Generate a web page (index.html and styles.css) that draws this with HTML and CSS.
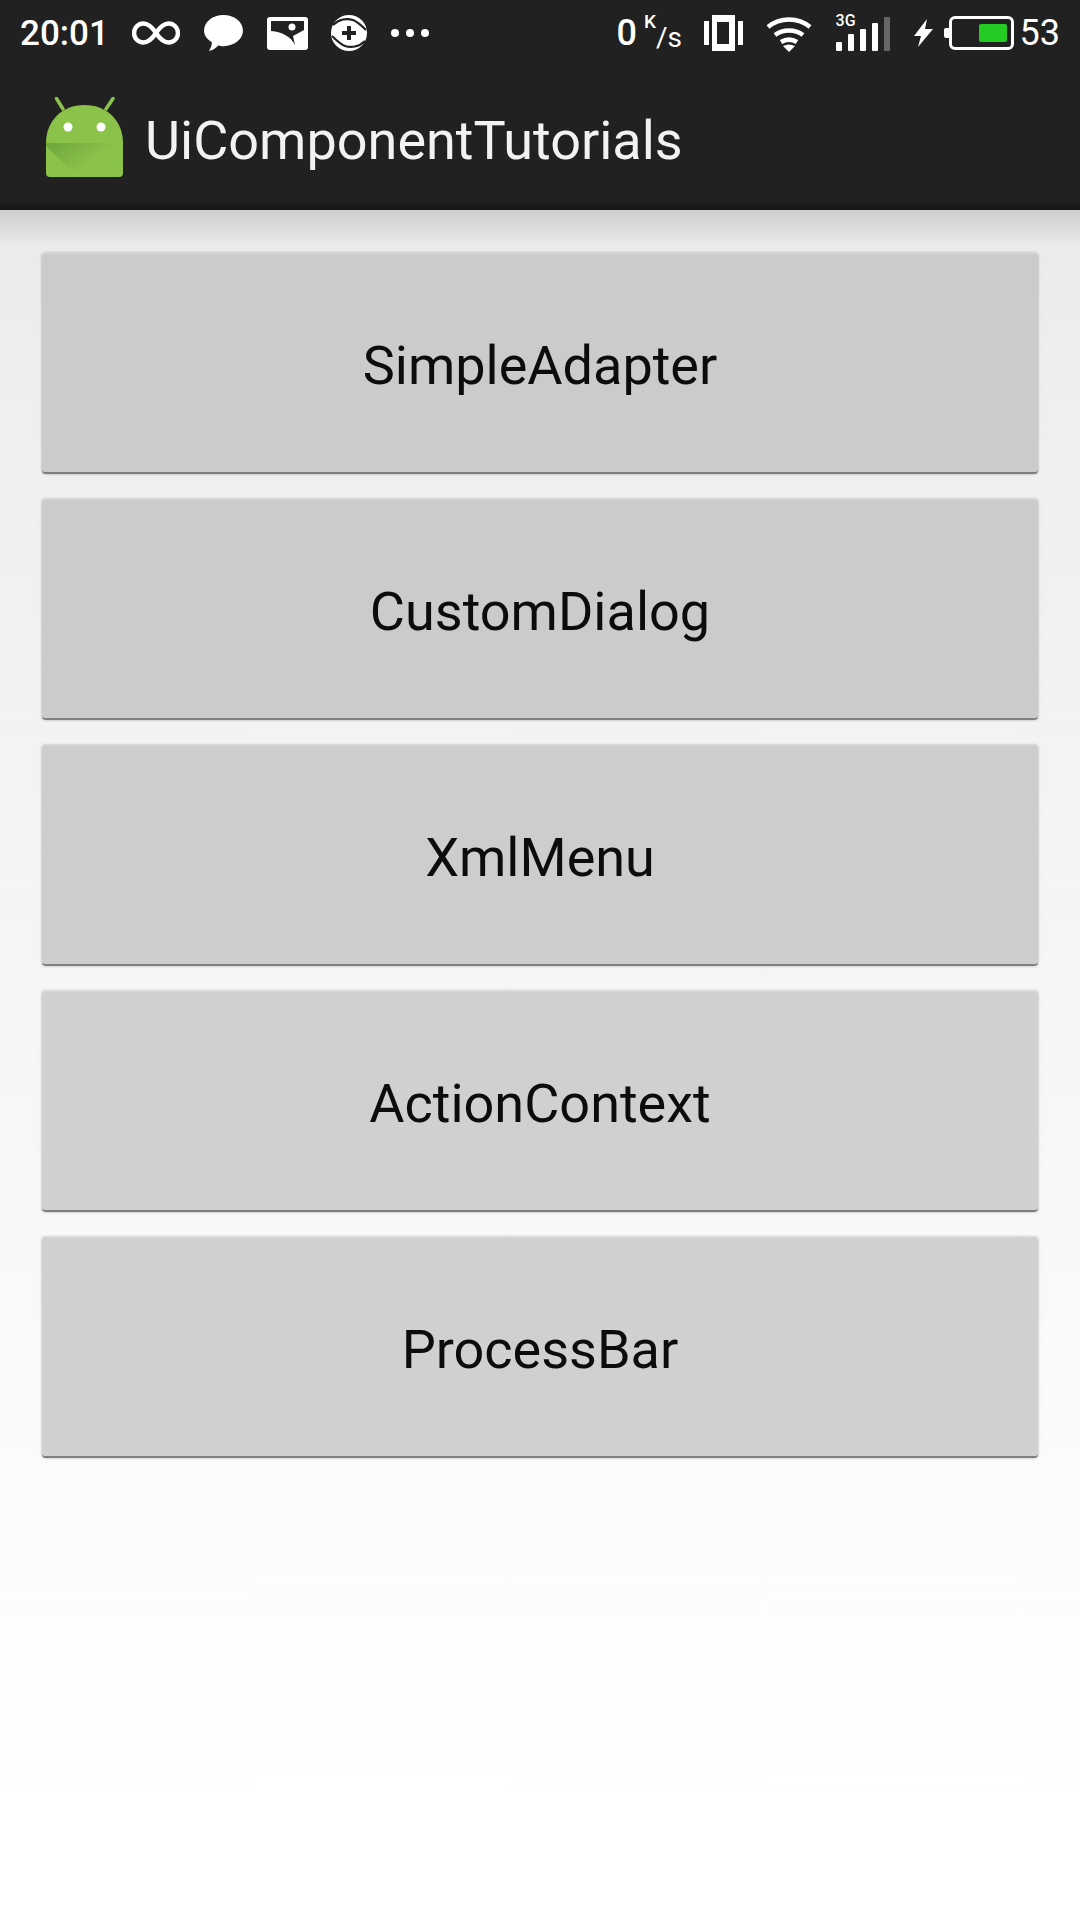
FILE: index.html
```html
<!DOCTYPE html>
<html lang="en">
<head>
  <meta charset="UTF-8" />
  <meta name="viewport" content="width=device-width, initial-scale=1.0"/>
  <title>UiComponentTutorials</title>
  <link rel="stylesheet" href="styles.css">
</head>
<body>
  <header class="top">
    <div class="status-bar">
      <div class="status-left">
        <span class="time">20:01</span>
        <svg class="ic-loop" width="48" height="24" viewBox="0 0 48 24"><path d="M24 12C20 6 16 2.500 11.500 2.500a9.500 9.500 0 0 0 0 19c4.500 0 8.500-3.500 12.500-9.500s8-9.500 12.500-9.500a9.500 9.500 0 0 1 0 19c-4.500 0-8.500-3.500-12.500-9.500z" fill="none" stroke="#fff" stroke-width="4.500"/></svg>
        <svg class="ic-chat" width="39" height="36" viewBox="0 0 40 37"><path d="M20 0c11 0 20 7 20 16s-9 16-20 16c-2 0-4 0-5-1-3 3-6 5-10 6 2-3 3-6 3-9C3 25 0 21 0 16 0 7 9 0 20 0z" fill="#fff"/></svg>
        <svg class="ic-pic" width="41" height="33" viewBox="0 0 41 33"><path fill-rule="evenodd" fill="#fff" d="M3 0h35a3 3 0 0 1 3 3v27a3 3 0 0 1-3 3H3a3 3 0 0 1-3-3V3a3 3 0 0 1 3-3zM4 4v10c12 1 20 6 24 14l-2-9 11-6V4z"/><circle cx="25" cy="10" r="3.500" fill="#fff"/></svg>
        <svg class="ic-plus" width="36" height="36" viewBox="0 0 36 36">
          <circle cx="18" cy="18" r="18" fill="#fff"/>
          <path d="M2 10C8 4 16 3 22 5c5 2 9 6 13 10" fill="none" stroke="#212121" stroke-width="2.200"/>
          <path d="M2 10C8 4 16 3 22 5c5 2 9 6 13 10" fill="none" stroke="#212121" stroke-width="2.200" transform="rotate(180 18 18)"/>
          <path d="M18 11v14M11 18h14" stroke="#212121" stroke-width="4"/>
        </svg>
        <div class="dots"><i></i><i></i><i></i></div>
      </div>
      <div class="status-right">
        <span class="speed"><span class="num">0</span><span class="unit-k">K</span><span class="unit-s">/s</span></span>
        <svg class="ic-vib" width="39" height="36" viewBox="0 0 39 36"><path fill-rule="evenodd" fill="#fff" d="M8 0h23v36H8zm5 7v22h12V7zM0 6h5v24H0zm34 0h5v24h-5z"/></svg>
        <svg class="ic-wifi" width="46" height="37" viewBox="0 0 46 37"><g fill="none" stroke="#fff" stroke-width="4.500"><path d="M2 12C14 2 32 2 44 12"/><path d="M9 20c8-6 20-6 28 0"/><path d="M15 27c5-3 11-3 16 0"/></g><path d="M17 31c4-2 8-2 12 0l-6 6z" fill="#fff"/></svg>
        <div class="signal">
          <span class="net">3G</span>
          <div class="bars"><i class="b1"></i><i class="b2"></i><i class="b3"></i><i class="b4"></i><i class="b5"></i></div>
        </div>
        <svg class="ic-bolt" width="19" height="28" viewBox="0 0 19 28"><path d="M13 0 0 17h7l-3 11 15-18h-8z" fill="#fff"/></svg>
        <div class="battery"><div class="fill"></div></div>
        <span class="level">53</span>
      </div>
    </div>
    <div class="toolbar">
      <svg class="logo" width="78" height="80" viewBox="0 0 78 80">
        <defs>
          <linearGradient id="fold" x1="0" y1="0" x2="1" y2="0.600">
            <stop offset="0" stop-color="#6fa53e"/>
            <stop offset="0.700" stop-color="#8bc34a"/>
          </linearGradient>
        </defs>
        <path d="M10.500 1.500 17 12M67 1.500 60 12" stroke="#8bc34a" stroke-width="3.500" stroke-linecap="round" fill="none"/>
        <path d="M0 46C0 24 16 8 38.500 8S77 24 77 46v30a4 4 0 0 1-4 4H4a4 4 0 0 1-4-4z" fill="#8bc34a"/>
        <path d="M0 46h77v2L46 80H32L0 49z" fill="url(#fold)"/>
        <circle cx="22" cy="30" r="4.500" fill="#fff"/>
        <circle cx="55" cy="30" r="4.500" fill="#fff"/>
      </svg>
      <h1 class="title">UiComponentTutorials</h1>
    </div>
  </header>

  <main class="list">
    <button class="item">SimpleAdapter</button>
    <button class="item">CustomDialog</button>
    <button class="item">XmlMenu</button>
    <button class="item">ActionContext</button>
    <button class="item">ProcessBar</button>
  </main>
</body>
</html>
```

FILE: styles.css
```css
* {
  box-sizing: border-box;
}

body {
  margin: 0;
  height: 1920px;
  font-family: Roboto, "Liberation Sans", sans-serif;
  background: linear-gradient(to bottom, #eaeaea 210px, #efefef 400px, #f8f8f8 1200px, #ffffff 1800px);
  overflow: hidden;
}

.top {
  height: 210px;
  background: linear-gradient(to bottom, #212121 200px, #171717 207px);
  color: #fff;
  position: relative;
}

.top::after {
  content: "";
  position: absolute;
  left: 0;
  right: 0;
  top: 100%;
  height: 36px;
  background: linear-gradient(to bottom, rgba(0,0,0,0.12), rgba(0,0,0,0));
}

.status-bar {
  height: 66px;
  padding: 0 20px 0 20px;
  display: flex;
  justify-content: space-between;
  align-items: center;
}

.status-left, .status-right {
  display: flex;
  align-items: center;
}

.time {
  font-size: 35px;
  font-weight: 500;
  width: 112px;
}

.ic-chat { margin-left: 24px; }
.ic-pic { margin-left: 24px; }
.ic-plus { margin-left: 23px; }

.dots {
  display: flex;
  gap: 7px;
  margin-left: 24px;
}

.dots i {
  width: 8px;
  height: 8px;
  border-radius: 50%;
  background: #fff;
}

.speed {
  display: flex;
  width: 64px;
  height: 36px;
  font-size: 36px;
  font-weight: 500;
  line-height: 36px;
}

.unit-k {
  font-size: 19px;
  line-height: 20px;
  margin-left: 7px;
  margin-top: -3px;
}

.unit-s {
  font-size: 28px;
  line-height: 28px;
  font-weight: 400;
  margin-top: 9px;
}

.ic-vib { margin-left: 23px; }
.ic-wifi { margin-left: 23px; }

.signal {
  margin-left: 24px;
  width: 54px;
  height: 36px;
  position: relative;
}

.net {
  position: absolute;
  left: 0;
  top: -1px;
  font-size: 16px;
  font-weight: 500;
  line-height: 14px;
}

.bars {
  height: 100%;
  display: flex;
  gap: 6px;
  align-items: flex-end;
}

.bars i {
  width: 6px;
  background: #fff;
  border-radius: 1px;
}

.b1 { height: 9px; }
.b2 { height: 17px; }
.b3 { height: 22px; }
.b4 { height: 28px; }
.bars .b5 { height: 34px; background: #666; }

.ic-bolt { margin-left: 24px; }

.battery {
  margin-left: 16px;
  width: 65px;
  height: 34px;
  border: 3px solid #fff;
  border-radius: 6px;
  padding: 5px 4px;
  display: flex;
  justify-content: flex-end;
  position: relative;
}

.battery::before {
  content: "";
  position: absolute;
  left: -8px;
  top: 9px;
  width: 5px;
  height: 10px;
  background: #fff;
  border-radius: 2px 0 0 2px;
}

.fill {
  width: 28px;
  background: #22cc22;
  border-radius: 2px;
}

.level {
  font-size: 36px;
  margin-left: 6px;
}

.toolbar {
  height: 142px;
  display: flex;
  align-items: center;
  padding: 0 0 0 46px;
  gap: 21px;
}

.title {
  margin: 6px 0 0;
  font-size: 54px;
  font-weight: 400;
  color: #f2f2f2;
}

.list {
  padding: 43px 42px 0;
  display: flex;
  flex-direction: column;
  gap: 25px;
}

.item {
  height: 221px;
  font-family: inherit;
  font-size: 54px;
  color: #0c0c0c;
  background: #cdcdcd;
  border: none;
  border-top: 1px solid #d6d6d6;
  border-bottom: 2px solid #7f7f7f;
  border-radius: 4px;
  box-shadow: 0 0 3px rgba(0,0,0,0.3);
  padding: 4px 0 0;
}

.item:nth-child(1), .item:nth-child(2) { background: #cbcbcb; }
.item:nth-child(4), .item:nth-child(5) { background: #d0d0d0; }
```
